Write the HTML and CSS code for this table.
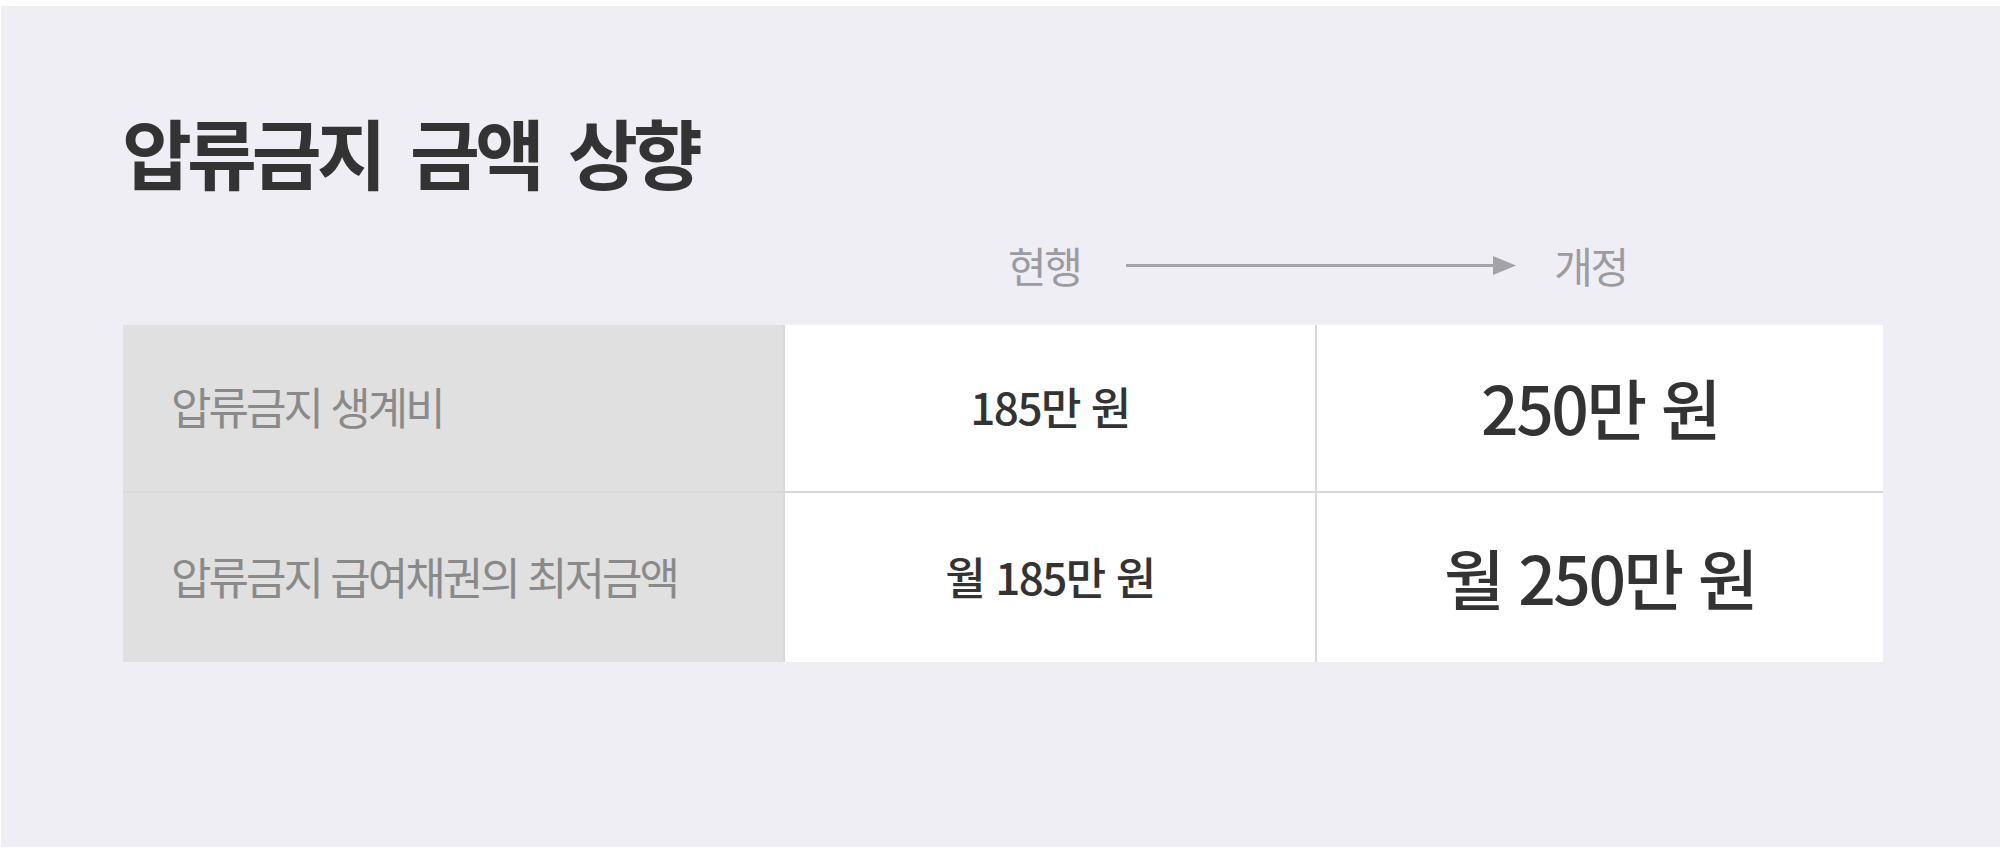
FILE: index.html
```html
<!DOCTYPE html>
<html lang="ko">
<head>
<meta charset="utf-8">
<title>압류금지 금액 상향</title>
<link rel="stylesheet" href="styles.css">
</head>
<body>
<main class="panel">
  <h1 class="title">압류금지 금액 상향</h1>
  <div class="compare-head">
    <span class="head-label">현행</span>
    <svg class="arrow" width="390" height="22" viewBox="0 0 390 22" aria-hidden="true">
      <rect x="0" y="9" width="370" height="3" fill="#a4a4a8"/>
      <polygon points="367,1 390,10.5 367,20" fill="#a4a4a8"/>
    </svg>
    <span class="head-label">개정</span>
  </div>
  <div class="table">
    <div class="cell label">압류금지 생계비</div>
    <div class="cell value">185만 원</div>
    <div class="cell value big">250만 원</div>
    <div class="cell label">압류금지 급여채권의 최저금액</div>
    <div class="cell value">월 185만 원</div>
    <div class="cell value big">월 250만 원</div>
  </div>
</main>
</body>
</html>
```

FILE: styles.css
```css
html, body {
  margin: 0;
  padding: 0;
  background: #ffffff;
}

body {
  font-family: "Noto Sans CJK KR", "Noto Sans", sans-serif;
  width: 2003px;
  height: 849px;
  overflow: hidden;
}

.panel {
  margin: 6px 3px 2px 1px;
  height: 841px;
  box-sizing: border-box;
  background: #efeef4;
  padding: 107px 0 0 121px;
  display: flex;
  flex-direction: column;
  align-items: flex-start;
}

.title {
  margin: 0;
  font-size: 76px;
  line-height: 76px;
  font-weight: 700;
  color: #333333;
  letter-spacing: -5px;
  word-spacing: 12px;
}

.compare-head {
  margin: 56px 0 0 886px;
  height: 40px;
  display: flex;
  align-items: center;
}

.head-label {
  font-size: 42px;
  line-height: 40px;
  color: #9c9ca0;
  letter-spacing: -2.5px;
  font-weight: 400;
}

.arrow {
  display: block;
  margin: 2px 38px 0 46px;
}

.table {
  margin-top: 40px;
  margin-left: 1px;
  display: grid;
  grid-template-columns: 660px 530px 566px;
  grid-template-rows: 166px 169px;
  gap: 2px;
  background: #d9d9db;
}

.cell {
  display: flex;
  align-items: center;
  background: #ffffff;
  color: #333333;
}

.label {
  background: #e0e0e0;
  color: #8a8a8a;
  font-size: 44px;
  letter-spacing: -3px;
  padding-left: 48px;
  padding-bottom: 4px;
}

.value {
  justify-content: center;
  font-size: 44px;
  font-weight: 500;
  letter-spacing: -1.5px;
  padding-bottom: 4px;
}

.value.big {
  font-size: 66px;
  font-weight: 500;
  letter-spacing: -2.5px;
}
```
